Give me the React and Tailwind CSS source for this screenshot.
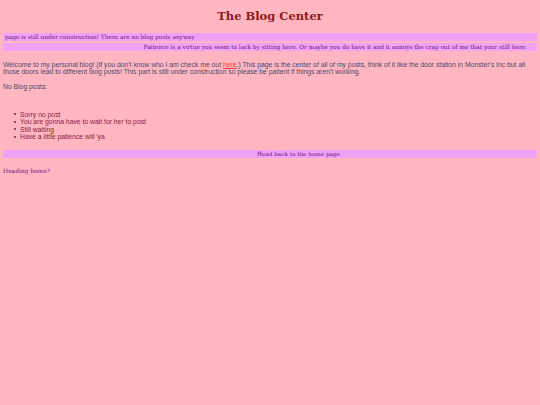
import React from 'react';

const serif = { fontFamily: '"DejaVu Serif", Georgia, serif' };
const sans = { fontFamily: '"Liberation Sans", Arial, sans-serif' };

const posts = ['Sorry no post', 'You are gonna have to wait for her to post', 'Still waiting', "Have a little patience will 'ya"];

export default function App() {
    return (
        <div className="min-h-[405px] w-full bg-[#ffb6c1] px-[3px] pt-[7px]">
            <h1 className="text-center text-[11.5px] font-bold leading-[18px] text-[#8b1a1a]" style={serif}>
                The Blog Center
            </h1>

            {/* scrolling bars, shown frozen */}
            <div className="mt-[8px] flex flex-col gap-[2px] text-[5.8px] font-medium leading-[8px] text-[#6e1482]" style={serif}>
                <div className="h-[8px] overflow-hidden bg-[#f0a2f7] pl-[2px]">
                    page is still under construction! There are no blog posts anyway
                </div>
                <div className="h-[8px] overflow-hidden bg-[#f0a2f7] pr-[10px] text-right">
                    Paitence is a virtue you seem to lack by sitting here. Or maybe you do have it and it annoys the crap out of me that your still here.
                </div>
            </div>

            <div className="text-[6.8px] leading-[7.2px] text-[#4a4a6e]" style={sans}>
                <p className="mt-[10px]">
                    Welcome to my personal blog! (If you don't know who I am check me out{' '}
                    <a className="text-[#ff3b3b] underline">here</a>.) This page is the center of all of my posts, think of it like the door station in Monster's Inc but all those doors lead to different blog posts! This part is still under construction so please be patient if things aren't working.
                </p>
                <p className="mt-[8px]">No Blog posts:</p>
            </div>

            <ul className="mt-[20px] flex flex-col pl-[11px] text-[6.8px] leading-[7.5px] text-[#8b2040]" style={sans}>
                {posts.map((p) => (
                    <li key={p} className="flex items-center gap-[4px]">
                        <span className="h-[2px] w-[2px] rounded-full bg-[#8b2040]" />
                        {p}
                    </li>
                ))}
            </ul>

            <div className="mt-[9px] h-[8px] overflow-hidden bg-[#f0a2f7] pl-[254px] text-[5.7px] font-medium leading-[8px] text-[#6e1482]" style={serif}>
                Head back to the home page
            </div>

            <p className="mt-[9px] text-[5.9px] font-medium leading-[8px] text-[#6e1482]" style={serif}>
                Heading home?
            </p>
        </div>
    );
}
